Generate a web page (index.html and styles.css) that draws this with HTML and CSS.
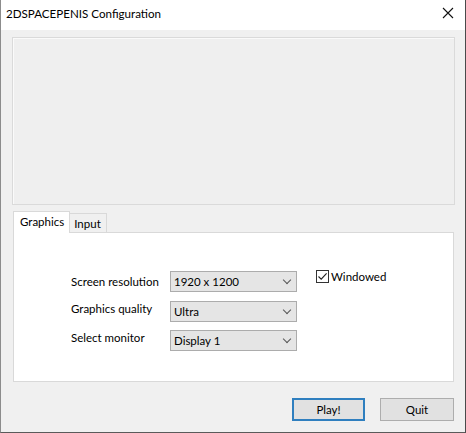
FILE: index.html
```html
<!DOCTYPE html>
<html>
<head>
    <meta charset="UTF-8">
    <title>2DSPACEPENIS Configuration</title>
    <link rel="stylesheet" href="styles.css">
</head>
<body>
    <div class="window">
        <div class="titlebar">
            <span class="title">2DSPACEPENIS Configuration</span>
            <span class="close">
                <svg width="12" height="12" viewBox="0 0 12 12"><path d="M1 1 L11 11 M11 1 L1 11" stroke="#111" stroke-width="1.1" fill="none"/></svg>
            </span>
        </div>

        <div class="client">
            <div class="banner"></div>

            <div class="tabs">
                <div class="tab active">Graphics</div>
                <div class="tab">Input</div>
            </div>

            <div class="tab-panel">
                <div class="settings">
                    <label class="row-label">Screen resolution</label>
                    <div class="combo"><span>1920 x 1200</span><i class="chevron"></i></div>
                    <div class="check">
                        <span class="box">
                            <svg width="11" height="11" viewBox="0 0 11 11"><path d="M1.5 5.5 L4.2 8.2 L9.6 2.3" stroke="#222" stroke-width="1.1" fill="none"/></svg>
                        </span>
                        <span>Windowed</span>
                    </div>

                    <label class="row-label">Graphics quality</label>
                    <div class="combo"><span>Ultra</span><i class="chevron"></i></div>
                    <div></div>

                    <label class="row-label">Select monitor</label>
                    <div class="combo"><span>Display 1</span><i class="chevron"></i></div>
                    <div></div>
                </div>
            </div>

            <div class="buttons">
                <button class="btn default">Play!</button>
                <button class="btn">Quit</button>
            </div>
        </div>
    </div>
</body>
</html>
```

FILE: styles.css
```css
html, body {
    margin: 0;
    padding: 0;
    background: #f0f0f0;
}
body {
    font-family: Lato, "Noto Sans", sans-serif;
    font-size: 11.5px;
    color: #000;
}
.window {
    box-sizing: border-box;
    width: 466px;
    height: 433px;
    border: 1px solid #8c8c8c;
    border-right-color: #4a4a4a;
    border-bottom-color: #5a5a5a;
    border-top: none;
    background: #f0f0f0;
    display: flex;
    flex-direction: column;
}
.titlebar {
    height: 30px;
    background: #fff;
    display: flex;
    align-items: center;
    justify-content: space-between;
    padding: 0 10px 0 5px;
}
.title {
    font-size: 11.6px;
    margin-top: -4px;
}
.close {
    display: flex;
    margin-top: -4px;
    margin-right: 1px;
}
.client {
    flex: 1;
    padding: 7px 10px 0 11px;
    display: flex;
    flex-direction: column;
}
.banner {
    height: 166px;
    border: 1px solid #dadada;
    box-shadow: inset 1px 1px 0 #fafafa;
    background: #efefef;
}
.tabs {
    display: flex;
    margin-top: 6px;
    padding-left: 1px;
    align-items: flex-end;
    height: 21px;
    position: relative;
    z-index: 1;
}
.tab {
    box-sizing: border-box;
    border: 1px solid #d9d9d9;
    border-bottom: none;
    background: #f0f0f0;
    height: 19px;
    padding: 0 5px 0 4px;
    line-height: 19px;
}
.tab.active {
    background: #fff;
    height: 22px;
    margin-bottom: -1px;
    line-height: 20px;
    padding: 0 5px 0 6px;
}
.tab + .tab {
    border-left: none;
}
.tab-panel {
    margin-left: 1px;
    width: 441px;
    box-sizing: border-box;
    height: 150px;
    background: #fff;
    border: 1px solid #d9d9d9;
}
.settings {
    display: grid;
    grid-template-columns: 99px 127px auto;
    row-gap: 8px;
    padding: 38px 0 0 57px;
}
.row-label {
    align-self: start;
    line-height: 16px;
    padding-top: 3px;
}
.settings .row-label:nth-of-type(2) {
    padding-top: 1px;
}
.settings .row-label:nth-of-type(3) {
    padding-top: 0;
}
.combo {
    box-sizing: border-box;
    height: 21px;
    background: #e5e5e5;
    border: 1px solid #acacac;
    display: flex;
    align-items: center;
    justify-content: space-between;
    padding: 0 6px 0 3px;
}
.settings .combo:nth-of-type(3) {
    margin-top: 1px;
}
.chevron {
    width: 5px;
    height: 5px;
    border-right: 1px solid #555;
    border-bottom: 1px solid #555;
    transform: rotate(45deg);
    margin-top: -4px;
}
.check {
    display: flex;
    align-items: center;
    gap: 2px;
    margin-left: 19px;
    margin-top: -1px;
    align-self: start;
}
.box {
    box-sizing: border-box;
    width: 13px;
    height: 13px;
    border: 1px solid #333;
    background: #fff;
    display: flex;
    align-items: center;
    justify-content: center;
}
.buttons {
    display: flex;
    justify-content: flex-end;
    gap: 15px;
    margin-top: 16px;
    padding-right: 1px;
}
.btn {
    box-sizing: border-box;
    width: 74px;
    height: 23px;
    font-family: inherit;
    font-size: 11.5px;
    background: #e1e1e1;
    border: 1px solid #adadad;
    padding: 0;
    color: #000;
}
.btn.default {
    border: 2px solid #2f7fbf;
    width: 73px;
}
```
